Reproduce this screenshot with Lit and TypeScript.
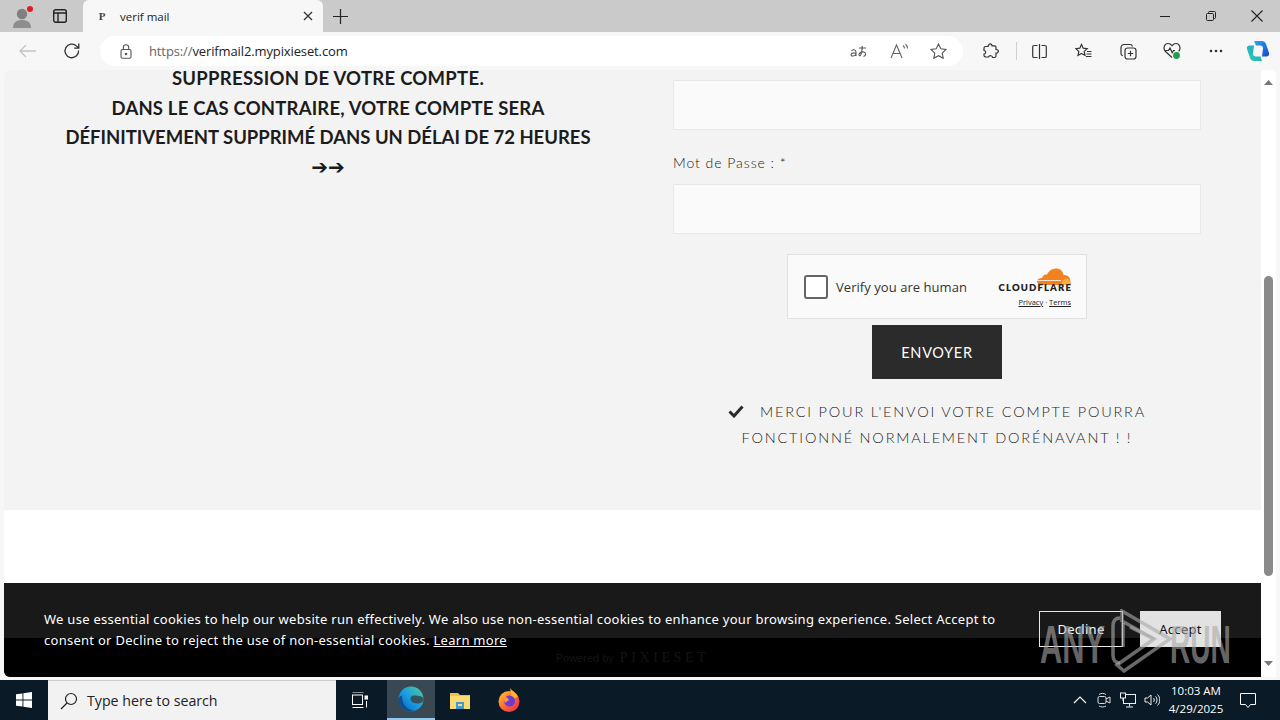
import { LitElement, html, css } from "lit";
import { customElement } from "lit/decorators.js";

@customElement("app-root")
export class AppRoot extends LitElement {
  static styles = css`
    :host { display: block; width: 1280px; height: 720px; overflow: hidden; font-family: "Noto Sans", sans-serif; position: relative; background: #f7f7f7; }
    svg { display: block; flex: none; }
    .tabstrip { height: 32px; background: #cacaca; display: flex; align-items: stretch; }
    .tabs-left { width: 83px; display: flex; align-items: center; }
    .profile { margin-left: 10px; width: 24px; height: 24px; }
    .vtabs { margin-left: 19px; width: 14px; height: 14px; }
    .tab { width: 240px; background: #f7f7f7; border-radius: 6px 6px 0 0; display: flex; align-items: center; font-size: 11.5px; color: #222; font-family: "Open Sans", sans-serif; }
    .fav { width: 37px; text-align: center; font: bold 11px "Liberation Serif", serif; color: #444; padding-left: 1px; box-sizing: border-box; }
    .tab-title { flex: 1; }
    .tab-x { margin-right: 10px; }
    .plus { margin-left: 10px; align-self: center; }
    .spacer { flex: 1; }
    .winbtns { display: flex; align-items: center; gap: 0; }
    .winbtn { width: 46px; display: flex; justify-content: center; }
    .toolbar { height: 38px; display: flex; align-items: center; background: #f7f7f7; box-sizing: border-box; }
    .back { margin-left: 19px; }
    .reload { margin-left: 26px; }
    .addr { margin-left: 19px; width: 863px; height: 30px; background: #fff; border-radius: 15px; display: flex; align-items: center; font-size: 13px; font-family: "Open Sans", sans-serif; color: #222; }
    .lock { margin-left: 20px; }
    .url { margin-left: 17px; flex: 1; letter-spacing: -.12px; }
    .url span { color: #666; }
    .addr-icons { display: flex; align-items: center; gap: 21px; margin-right: 16px; }
    .addr-icons svg:first-child { margin-right: 2px; }
    .tool-icons { display: flex; align-items: center; margin-left: 20px; }
    .tool-icons svg { margin-right: 26px; }
    .tool-sep { width: 1px; height: 18px; background: #d0d0d0; margin: 0 15px 0 -9px; }
    .ti-a { margin-left: 2px; }
    .ti-more { margin-left: 2px; margin-right: 23px !important; }
    .ti-cp { margin-right: 0 !important; }
    .viewport { height: 607px; position: relative; overflow: hidden; margin: 0 4px; border-radius: 6px 6px 0 6px; display: flex; background: #fff; }
    .page { flex: 1; position: relative; overflow: hidden; display: flex; flex-direction: column; min-width: 0; }
    .main { height: 440px; flex: none; background: #f3f3f3; display: grid; grid-template-columns: 528px 528px; column-gap: 81px; padding-left: 60px; color: #222; }
    .left { text-align: center; font-family: "Lato", sans-serif; font-weight: 700; font-size: 18.5px; line-height: 29.5px; color: #1c1c1c; margin-top: -6px; white-space: nowrap; }
    .l1 { letter-spacing: .28px; }
    .l2 { letter-spacing: .18px; }
    .l3 { letter-spacing: -.02px; }
    .arrows { font-size: 20px; line-height: 29.5px; font-family: "DejaVu Sans", sans-serif; letter-spacing: 0; font-weight: 700; }
    .right { padding-top: 10px; display: flex; flex-direction: column; align-items: center; }
    .input { width: 100%; height: 50px; box-sizing: border-box; background: #fafafa; border: 1px solid #e8e8e8; flex: none; }
    .label { align-self: flex-start; font-family: "Lato", sans-serif; font-weight: 300; font-size: 14px; letter-spacing: .95px; color: #1a1a1a; height: 54px; line-height: 66px; }
    .turnstile { margin-top: 20px; width: 300px; height: 65px; box-sizing: border-box; background: #fafafa; border: 1px solid #e0e0e0; display: flex; align-items: center; font-family: "Open Sans", sans-serif; font-size: 13px; color: #333; flex: none; }
    .cb { margin-left: 16px; width: 24px; height: 24px; box-sizing: border-box; border: 2px solid #666; border-radius: 3px; background: #fff; flex: none; }
    .cb-label { margin-left: 8px; letter-spacing: .05px; flex: 1; }
    .cf { margin-right: 15px; display: flex; flex-direction: column; align-items: flex-end; }
    .cf-name { font: 800 9.5px "Lato", sans-serif; letter-spacing: 1.15px; margin-right: -1px; color: #222; line-height: 9px; margin-top: -3px; }
    .cf-links { font-size: 7.5px; line-height: 9px; margin-top: 6px; color: #222; }
    .cf-links u { text-decoration: underline; }
    .send { margin-top: 6px; width: 130px; height: 54px; background: #2b2b2b; color: #fff; display: flex; align-items: center; justify-content: center; font: 400 14.5px "Lato", sans-serif; letter-spacing: .7px; flex: none; }
    .ok { margin-top: 20px; text-align: center; font: 300 14.5px/26px "Lato", sans-serif; letter-spacing: 1.8px; color: #1f1f1f; white-space: nowrap; }
    .ok svg { display: inline-block; vertical-align: -1px; margin-right: 16px; }
    .white { height: 128px; flex: none; background: #fff; }
    .foot { flex: 1; background: #000; display: flex; justify-content: center; align-items: center; gap: 6px; color: #bbb; }
    .foot .p1 { font: 11px "Liberation Sans", sans-serif; }
    .foot .p2 { font: 14px "Liberation Serif", serif; letter-spacing: 3.6px; }
    .banner { position: absolute; left: 0; right: 0; bottom: 0; height: 94px; background: rgba(0,0,0,.9); border-radius: 0 0 0 6px; display: flex; box-sizing: border-box; padding: 26px 40px 0 40px; color: #fff; font-size: 13px; line-height: 21px; letter-spacing: .27px; font-family: "Noto Sans", sans-serif; }
    .banner-text { width: 960px; flex: none; }
    .banner-text a { color: #fff; text-decoration: underline; }
    .bbtn { height: 36px; box-sizing: border-box; display: flex; align-items: center; justify-content: center; margin-top: 2px; }
    .decline { width: 84px; border: 1px solid #e8e8e8; margin-left: 35px; }
    .accept { width: 81px; background: #e2e2e2; color: #111; margin-left: 17px; }
    .scrollbar { width: 15px; flex: none; background: #fff; position: relative; display: flex; flex-direction: column; justify-content: space-between; align-items: center; padding: 10px 0 11px; box-sizing: border-box; }
    .thumb { position: absolute; left: 3px; width: 9px; top: 206px; height: 300px; background: #8a8a8a; border-radius: 5px; }
    .taskbar { position: absolute; left: 0; right: 0; bottom: 0; height: 40px; background: #0a1a27; display: flex; align-items: center; color: #fff; }
    .start { width: 48px; display: flex; justify-content: center; }
    .search { width: 288px; height: 40px; background: #f2f2f2; display: flex; align-items: center; color: #222; font-size: 14.2px; font-family: "Open Sans", sans-serif; box-sizing: border-box; border: 1px solid #ccc; border-width: 1px 0 0; }
    .search svg { margin: 0 9px 0 12px; }
    .taskview { width: 48px; display: flex; justify-content: center; }
    .tb-item { width: 49px; height: 40px; display: flex; align-items: center; justify-content: center; box-sizing: border-box; }
    .tb-item.active { width: 48px; background: #3a4853; border-bottom: 2px solid #90c8ee; margin-left: 3px; }
    .tray { display: flex; align-items: center; }
    .tray-icons { display: flex; align-items: center; gap: 8px; }
    .clock { width: 72px; text-align: center; font: 11.5px/18px "Open Sans", sans-serif; color: #fff; }
    .notif { width: 32px; margin: 0 16px 0 0; display: flex; justify-content: center; }
    .wm { position: absolute; left: 1038px; top: 609px; width: 194px; height: 64px; color: rgba(170,170,170,.62); font: 700 53px/64px "Liberation Sans", sans-serif; pointer-events: none; }
    .wm span { position: absolute; top: 4px; transform-origin: left center; transform: scaleX(.58); white-space: nowrap; }
    .wm .any { left: 2px; }
    .wm .run { left: 132px; transform: scaleX(.53); }
    .wm svg { position: absolute; left: 70px; top: 0; }
  `;

  render() {
    return html`
      <div class="tabstrip">
        <div class="tabs-left">
          <svg class="profile" viewBox="0 0 24 24"><circle cx="12" cy="10" r="5.2" fill="#808080"/><path d="M3 24c0-6 4-8 9-8s9 2 9 8z" fill="#8e8e8e"/><circle cx="20" cy="5" r="3" fill="#e01b24"/></svg>
          <svg class="vtabs" viewBox="0 0 14 14" fill="none" stroke="#222" stroke-width="1.4"><rect x=".7" y=".7" width="12.6" height="12.6" rx="2"/><path d="M.7 4h12.6M5 4v9.3"/></svg>
        </div>
        <div class="tab">
          <div class="fav">P</div>
          <div class="tab-title">verif mail</div>
          <svg class="tab-x" width="10" height="10" viewBox="0 0 10 10" stroke="#333" stroke-width="1.3"><path d="M1 1l8 8M9 1l-8 8"/></svg>
        </div>
        <svg class="plus" width="15" height="15" viewBox="0 0 15 15" stroke="#222" stroke-width="1.2"><path d="M7.5 0v15M0 7.5h15"/></svg>
        <div class="spacer"></div>
        <div class="winbtns">
          <div class="winbtn"><svg width="10" height="10" viewBox="0 0 10 10" stroke="#222"><path d="M0 5.5h10"/></svg></div>
          <div class="winbtn"><svg width="10" height="10" viewBox="0 0 10 10" fill="none" stroke="#222"><rect x=".5" y="2.5" width="7" height="7" rx="1"/><path d="M2.5 2.5V1.5a1 1 0 0 1 1-1h5a1 1 0 0 1 1 1v5a1 1 0 0 1-1 1h-1"/></svg></div>
          <div class="winbtn"><svg width="12" height="12" viewBox="0 0 12 12" stroke="#222" stroke-width="1.1"><path d="M.5.5l11 11M11.5.5l-11 11"/></svg></div>
        </div>
      </div>
      <div class="toolbar">
        <svg class="back" width="18" height="14" viewBox="0 0 18 14" fill="none" stroke="#c4c4c4" stroke-width="1.3"><path d="M17 7H1M7 1L1 7l6 6"/></svg>
        <svg class="reload" width="18" height="18" viewBox="0 0 18 18" fill="none" stroke="#333" stroke-width="1.3"><path d="M15.6 8.5a6.8 6.8 0 1 1-2-4.4l2 1.9M15.8 1.5v4.7h-4.6"/></svg>
        <div class="addr">
          <svg class="lock" width="12" height="15" viewBox="0 0 12 15" fill="none" stroke="#555" stroke-width="1.1"><rect x="1" y="5.5" width="10" height="8.8" rx="1.5"/><path d="M3.3 5.5V3.4a2.7 2.7 0 0 1 5.4 0v2.1"/><circle cx="6" cy="10" r=".8" fill="#555"/></svg>
          <div class="url"><span>https://</span>verifmail2.mypixieset.com</div>
          <div class="addr-icons">
            <svg width="17" height="14" viewBox="0 0 17 14" fill="none" stroke="#555" stroke-width="1.1"><path d="M6 12V8a2.400 2.400 0 0 0-4.500-1M6 9.500C4 8.500 1 9 1 10.800c0 1.800 3.500 1.700 5-.3"/><path d="M9 4h7M12.200 2c0 4-.5 7-1.500 9-.8 1.500-2 .5-1.700-.8.4-1.700 3-2.700 5-2.200 2.200.6 2.200 3.500-.5 4.500"/></svg>
            <svg width="19" height="16" viewBox="0 0 19 16" fill="none" stroke="#666" stroke-width="1.1"><path d="M1 15L6.500 2 12 15M3 10.500h7M13 2.500c1 .8 1.500 1.800 1.500 3M15.500 1c1.300 1.200 2 2.700 2 4.500"/></svg>
            <svg width="17" height="16" viewBox="0 0 17 16" fill="none" stroke="#555" stroke-width="1.1"><path d="M8.500 1l2.300 4.800 5.200.7-3.800 3.600 1 5.200-4.700-2.600-4.700 2.600 1-5.200L1 6.500l5.200-.7z"/></svg>
          </div>
        </div>
        <div class="tool-icons">
          <svg width="16" height="17" viewBox="0 0 16 17" fill="none" stroke="#333" stroke-width="1.2"><path d="M6 1.500c1-1 3-.5 3 1.300h2.500c1 0 1.500.7 1.500 1.500v2.200c2 0 3 1.200 2 2.700-.5.800-1.300 1-2 1v2.800c0 1-.7 1.500-1.500 1.500H9.500c0-2-3-2.500-4-.5H3c-1 0-2-.7-2-1.700V11c2 0 2.500-3 0-3.500V5c0-1 .7-1.500 1.700-1.500H5c0-.800.3-1.500 1-2z"/></svg>
          <div class="tool-sep"></div>
          <svg width="15" height="15" viewBox="0 0 15 15" fill="none" stroke="#333" stroke-width="1.2"><path d="M5.500 1.500H2a1.300 1.300 0 0 0-1.300 1.300v9.400A1.300 1.300 0 0 0 2 13.500h3.500M9.500 1.500H13a1.300 1.300 0 0 1 1.300 1.300v9.400a1.300 1.300 0 0 1-1.300 1.300H9.500M7.500 0v15"/></svg>
          <svg class="ti-a" width="17" height="16" viewBox="0 0 17 16" fill="none" stroke="#333" stroke-width="1.2"><path d="M6.500 1.500l1.700 3.700 4 .5-3 2.700.8 4-3.500-2-3.500 2 .8-4-3-2.700 4-.5zM12 8.500h4.500M11.500 11h5M11 13.500h5.500"/></svg>
          <svg class="ti-a" width="17" height="17" viewBox="0 0 17 17" fill="none" stroke="#333" stroke-width="1.2"><rect x="5" y="5" width="11" height="11" rx="2.500"/><path d="M10.500 7.800v5.400M7.800 10.500h5.400M12.500 3.500A2.500 2.500 0 0 0 10 1.500H4A3 3 0 0 0 1 4.500v6c0 1 .8 2 1.800 2.300"/></svg>
          <svg width="18" height="18" viewBox="0 0 18 18" fill="none" stroke="#333" stroke-width="1.200"><path d="M9 15.500L2.500 9.500C-.5 6.500 1.500 1.500 5 1.500c2 0 3 1 4 2.200 1-1.200 2-2.200 4-2.200 3.500 0 5.500 5 2.500 8"/><path d="M2 8.500h3.500l1.500-2.500 2.300 5 1.200-2.500h1.500"/><circle cx="13.500" cy="13.500" r="4" fill="#1f9d55" stroke="#f7f7f7"/></svg>
          <svg class="ti-more" width="14" height="4" viewBox="0 0 14 4" fill="#333"><circle cx="2" cy="2" r="1.300"/><circle cx="7" cy="2" r="1.300"/><circle cx="12" cy="2" r="1.300"/></svg>
          <svg class="ti-cp" width="24" height="24" viewBox="0 0 24 24"><defs><linearGradient id="cpa" x1="0" y1="0" x2="1" y2="1"><stop offset="0" stop-color="#2ea7e8"/><stop offset=".6" stop-color="#1d6fe0"/><stop offset="1" stop-color="#1b45c5"/></linearGradient><linearGradient id="cpb" x1="0" y1="1" x2="1" y2="0"><stop offset="0" stop-color="#2fd0a4"/><stop offset="1" stop-color="#1e9be0"/></linearGradient></defs><path d="M8 2h8c2 0 3 1 4 3l3 9c.6 2-.8 3.500-2.500 3.500H16l1-8c.2-2-1-3-3-3H10z" fill="url(#cpa)"/><path d="M16 22H8c-2 0-3-1-4-3L1 10c-.6-2 .8-3.500 2.500-3.500H8l-1 8c-.2 2 1 3 3 3h4.500z" fill="url(#cpb)"/></svg>
        </div>
      </div>
      <div class="viewport">
        <div class="page">
          <div class="main">
            <div class="left">
              <div class="l1">SUPPRESSION DE VOTRE COMPTE.</div>
              <div class="l2">DANS LE CAS CONTRAIRE, VOTRE COMPTE SERA</div>
              <div class="l3">DÉFINITIVEMENT SUPPRIMÉ DANS UN DÉLAI DE 72 HEURES</div>
              <div class="arrows">➔➔</div>
            </div>
            <div class="right">
              <div class="input"></div>
              <div class="label">Mot de Passe : *</div>
              <div class="input"></div>
              <div class="turnstile">
                <div class="cb"></div>
                <div class="cb-label">Verify you are human</div>
                <div class="cf">
                  <svg width="36" height="19" viewBox="0 0 36 19"><path d="M7 18c-3 0-5-1-5-3.500S5 11 7 11c1-3 3-4 5-3.500C14 3 18 1 22 1.500c4 .5 6 3.500 6.500 6.500 4-.5 7 2.500 7 6.500 0 2-.5 3.500-.5 3.500z" fill="#f4811f"/><path d="M26 18c1-4 2-6 5-6.500 3-.5 4.500 3 4.500 6.500z" fill="#faad3f"/><path d="M2 13.500h24" stroke="#fafafa" stroke-width=".8"/></svg>
                  <div class="cf-name">CLOUDFLARE</div>
                  <div class="cf-links"><u>Privacy</u> · <u>Terms</u></div>
                </div>
              </div>
              <div class="send">ENVOYER</div>
              <div class="ok">
                <svg width="16" height="13" viewBox="0 0 16 13" fill="none" stroke="#2b2b2b" stroke-width="3"><path d="M1.500 6.500l4.500 4.500 8.500-9.500"/></svg>MERCI POUR L'ENVOI VOTRE COMPTE POURRA<br/>FONCTIONNÉ NORMALEMENT DORÉNAVANT ! !
              </div>
            </div>
          </div>
          <div class="white"></div>
          <div class="foot"><span class="p1">Powered by</span><span class="p2">PIXIESET</span></div>
          <div class="banner">
            <div class="banner-text">We use essential cookies to help our website run effectively. We also use non-essential cookies to enhance your browsing experience. Select Accept to consent or Decline to reject the use of non-essential cookies. <a>Learn more</a></div>
            <div class="bbtn decline">Decline</div>
            <div class="bbtn accept">Accept</div>
          </div>
        </div>
        <div class="scrollbar">
          <svg width="9" height="5" viewBox="0 0 9 5" fill="#777"><path d="M4.500 0L9 5H0z"/></svg>
          <div class="thumb"></div>
          <svg width="9" height="5" viewBox="0 0 9 5" fill="#777"><path d="M0 0h9L4.500 5z"/></svg>
        </div>
      </div>
      <div class="wm">
        <span class="any">ANY</span>
        <svg width="66" height="64" viewBox="0 0 66 64" fill="none" stroke="rgba(170,170,170,.62)" stroke-width="3.500"><path d="M12 9C7 9 5 12 5 17V46c0 5 2 8 7 8"/><path d="M14 2L62 30 16 62 9 56 46 30 14 12z"/><path d="M15 14V38M22 18l24 12"/></svg>
        <span class="run">RUN</span>
      </div>
      <div class="taskbar">
        <div class="start"><svg width="16" height="16" viewBox="0 0 16 16" fill="#fff"><path d="M0 2.300l6.500-.9v6.200H0zM7.400 1.300L16 0v7.600H7.400zM0 8.400h6.500v6.200L0 13.700zM7.400 8.400H16V16l-8.600-1.300z"/></svg></div>
        <div class="search">
          <svg width="18" height="18" viewBox="0 0 18 18" fill="none" stroke="#222" stroke-width="1.200"><circle cx="11" cy="7" r="5.500"/><path d="M7 11l-6 6"/></svg>
          <span>Type here to search</span>
        </div>
        <div class="taskview"><svg width="16" height="16" viewBox="0 0 16 16" fill="none" stroke="#fff" stroke-width="1"><path d="M.500 0h11M.500 15.500h11"/><rect x=".5" y="3" width="10" height="9.500"/><rect x="13" y="4" width="2.500" height="3" fill="#fff"/><path d="M14.500 9v6.500"/></svg></div>
        <div class="tb-item active"><svg width="26" height="26" viewBox="0 0 26 26"><defs><linearGradient id="ed" x1="0" y1="1" x2="1" y2="0"><stop offset="0" stop-color="#0c59a8"/><stop offset=".5" stop-color="#1b9de2"/><stop offset="1" stop-color="#4fd08f"/></linearGradient></defs><circle cx="13" cy="13" r="12.500" fill="url(#ed)"/><path d="M25.500 13c0 3-2.500 4.500-6 4.500-3 0-6-1-7-4-.6-2 1-4 4-4 4 0 9 1 9 3.500z" fill="#3a4853" opacity=".9"/><path d="M4 11c0 7 5 13 12 13.500C9 27 .5 22 .5 13 2 9 4 9 4 11z" fill="#0c4f96"/></svg></div>
        <div class="tb-item"><svg width="22" height="20" viewBox="0 0 22 20"><path d="M1 3h8l2 2h10v14H1z" fill="#f0c14b"/><rect x="1" y="6" width="20" height="13" fill="#fbdc74"/><rect x="7" y="12" width="8" height="7" fill="#3f9ad6"/><rect x="9" y="14" width="4" height="2" fill="#fbdc74"/></svg></div>
        <div class="tb-item"><svg width="24" height="24" viewBox="0 0 24 24"><defs><linearGradient id="fx" x1="0" y1="0" x2="1" y2="1"><stop offset="0" stop-color="#ffcb36"/><stop offset=".5" stop-color="#ff6a2b"/><stop offset="1" stop-color="#e3235f"/></linearGradient></defs><circle cx="12" cy="13.500" r="10.500" fill="url(#fx)"/><path d="M13 0c2 3 6 4 8 9l-6 2z" fill="#ffb52e"/><circle cx="12.500" cy="13" r="5.500" fill="#6d3bd0"/><path d="M6 9c3-1 5 1 6 3l-4 3z" fill="#ff9632"/></svg></div>
        <div class="spacer"></div>
        <div class="tray">
          <div class="tray-icons">
            <svg width="16" height="16" viewBox="0 0 16 16" fill="none" stroke="#fff" stroke-width="1.100"><path d="M2 11l6-6 6 6"/></svg>
            <svg width="16" height="16" viewBox="0 0 16 16" fill="none" stroke="#ddd" stroke-width="1"><rect x="2" y="4.500" width="8" height="7" rx="1.500"/><path d="M10 7l4-2v6l-4-2M3 2.500c2-1.500 5-1.500 7 0M3 14c2 1.300 5 1.300 7 0"/></svg>
            <svg width="16" height="16" viewBox="0 0 16 16" fill="none" stroke="#eee" stroke-width="1"><rect x="3.500" y="2.500" width="12" height="9"/><path d="M9.500 11.500v3M6 15h7"/><rect x=".5" y="1" width="5" height="5" fill="#0a1a27"/><path d="M3 6v3"/></svg>
            <svg width="16" height="16" viewBox="0 0 16 16" fill="none" stroke="#eee" stroke-width="1"><path d="M1 6v4h2.500L7 13V3L3.500 6zM9.500 6c1 1 1 3 0 4M11.500 4.300c2 2 2 5.400 0 7.400M13.500 2.500c3 3 3 8 0 11"/></svg>
          </div>
          <div class="clock">10:03 AM<br/>4/29/2025</div>
          <div class="notif"><svg width="16" height="15" viewBox="0 0 16 15" fill="none" stroke="#fff" stroke-width="1"><path d="M.5.500h15v11h-5l-2.500 3-2.500-3h-5z"/></svg></div>
        </div>
      </div>
    `;
  }
}
